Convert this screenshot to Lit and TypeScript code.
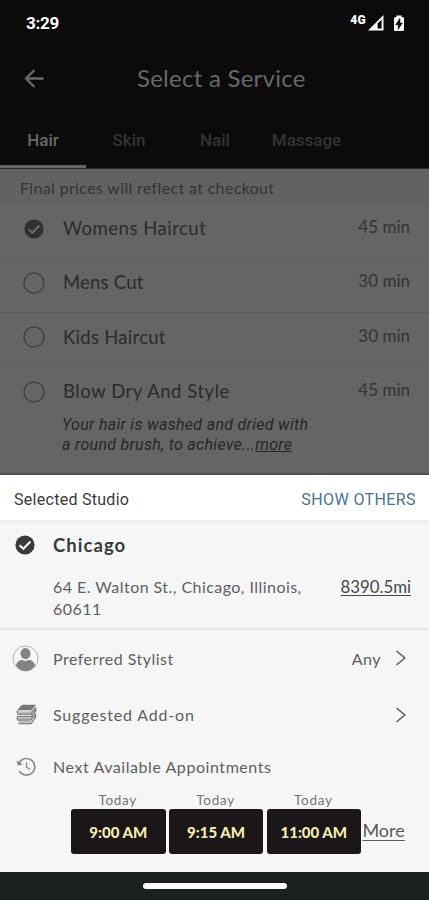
import { LitElement, html, css, svg, nothing } from "lit";
import { customElement } from "lit/decorators.js";
import { classMap } from "lit/directives/class-map.js";

interface Service {
  name: string;
  cls: string;
  mins: number;
  selected?: boolean;
  detail?: boolean;
}

const TABS = ["Hair", "Skin", "Nail", "Massage"];

const SERVICES: Service[] = [
  { name: "Womens Haircut", cls: "womens", mins: 45, selected: true },
  { name: "Mens Cut", cls: "mens", mins: 30 },
  { name: "Kids Haircut", cls: "kids", mins: 30 },
  { name: "Blow Dry And Style", cls: "blow", mins: 45, detail: true },
];

const SLOTS = ["9:00 AM", "9:15 AM", "11:00 AM"];

const check = (fill: string, tick: string) => html`<svg width="22" height="22" viewBox="0 0 22 22">
  ${svg`<circle cx="11" cy="11" r="9.6" fill=${fill} />
  <path d="M5.6 11.3 L9.4 14.8 L16.5 7.6" fill="none" stroke=${tick} stroke-width="2.1" />`}
</svg>`;

const ring = html`<svg width="22" height="22" viewBox="0 0 22 22">
  <circle cx="11" cy="11" r="10" fill="none" stroke="#3b3b3b" stroke-width="1.2" />
</svg>`;

const chevron = html`<svg class="chev" width="12" height="18" viewBox="0 0 12 18">
  <path d="M1.5 2 L9.8 9 L1.5 16" fill="none" stroke="#5a5a5a" stroke-width="1.5" />
</svg>`;

@customElement("app-root")
export class AppRoot extends LitElement {
  static styles = css`
    :host {
      display: flex;
      flex-direction: column;
      height: 900px;
      width: 429px;
      overflow: hidden;
      background: #656565;
      font-family: Lato, "Open Sans", sans-serif;
      white-space: nowrap;
    }
    * { box-sizing: border-box; }
    svg { display: block; flex: none; }
    .top { background: #0c0a0b; height: 169px; flex: none; display: flex; flex-direction: column; border-bottom: 1px solid #2d2c2d; }
    .status { height: 46px; padding: 0 24px 0 26px; display: flex; align-items: center; color: #fff; }
    .clock { font: 700 17px/46px Roboto, sans-serif; flex: 1; letter-spacing: -0.3px; }
    .net { font: 900 12px/12px Roboto, sans-serif; align-self: flex-start; margin-top: 14px; margin-right: 2px; letter-spacing: 0.3px; }
    .signal { margin-right: 9px; }
    .appbar { height: 66px; padding-left: 23px; display: grid; grid-template-columns: 22px 1fr; align-items: center; }
    .title { font-size: 24px; line-height: 64px; height: 66px; color: #686768; padding-left: 92px; letter-spacing: 0.25px; }
    .tabs { height: 56px; display: grid; grid-template-columns: 86px 86px 86px 97px; }
    .tab { height: 56px; font: 500 17px/57px Roboto, sans-serif; color: #343334; text-align: center; border-bottom: 3px solid transparent; }
    .tab.on { color: #696869; border-bottom-color: #646364; }
    .notice { height: 35px; flex: none; padding-left: 20px; background: #626262; color: #333; font-size: 16px; line-height: 38px; letter-spacing: 0.34px; }
    .service { height: 54.4px; flex: none; border-bottom: 1px solid #5c5c5c; display: grid; grid-template-columns: 40px 1fr auto; padding: 0 19px 0 23px; }
    .service.tall { height: 108px; border-bottom: 2px solid #505050; grid-template-rows: 48px 1fr; }
    .mark { padding-top: 13.5px; }
    .name { font-size: 18.5px; line-height: 48px; color: #2b2b2b; letter-spacing: 0.5px; }
    .name.mens { letter-spacing: 0.2px; }
    .name.kids { letter-spacing: 0.28px; }
    .name.blow { letter-spacing: 0.55px; }
    .mins { font-size: 17px; line-height: 46px; color: #333; }
    .desc { grid-column: 2 / 4; font: italic 400 16px/19.5px Roboto, sans-serif; color: #272727; letter-spacing: 0.3px; margin-left: -1px; }
    .sheet { background: #f6f6f6; height: 397px; flex: none; }
    .head { height: 48px; background: #fff; border-bottom: 3px solid #eeeeee; padding: 1px 13px 0 14px; display: flex; justify-content: space-between; font: 400 16px/47px Roboto, sans-serif; letter-spacing: 0.28px; color: #3a3a3a; }
    .others { color: #4a7291; letter-spacing: 0.4px; }
    .studio { height: 107px; border-bottom: 2px solid #e9e9e9; display: grid; grid-template-columns: 39px 1fr auto; grid-template-rows: 53px 1fr; padding: 0 18px 0 14px; }
    .smark { padding-top: 10.5px; }
    .city { grid-column: 2 / 4; font-size: 18.5px; font-weight: 700; line-height: 45px; color: #3a3a3a; letter-spacing: 1.05px; }
    .addr { grid-column: 2; font-size: 16px; line-height: 22px; color: #606060; letter-spacing: 0.45px; }
    .dist { font-size: 16.8px; line-height: 21px; color: #484848; text-decoration: underline; text-underline-offset: 2px; text-decoration-thickness: 1px; }
    .opt { display: flex; align-items: center; padding: 0 22px 0 12px; font-size: 16px; color: #606060; height: 56.5px; letter-spacing: 0.48px; }
    .opt.addon { letter-spacing: 0.83px; }
    .opt.next { height: 47.5px; letter-spacing: 0.56px; }
    .ico { width: 41px; flex: none; display: flex; }
    .ico.inset { padding-left: 4px; }
    .label { flex: 1; }
    .any { margin-right: 14px; }
    .next .label { margin-top: -1px; }
    .slots { display: flex; gap: 3.3px; padding-left: 71px; }
    .slot { width: 94.5px; text-align: center; }
    .day { font-size: 13.5px; line-height: 18px; color: #747474; letter-spacing: 0.7px; text-indent: -1px; }
    .time { height: 45px; border-radius: 3px; background: #1b1617; color: #f2ebb4; font-size: 15px; font-weight: 900; line-height: 46px; }
    .more { font-size: 18px; line-height: 26px; color: #5a5a5a; text-decoration: underline; text-underline-offset: 3px; text-decoration-thickness: 1px; margin: 26px 0 0 -2px; }
    .nav { flex: 1; background: #1b2120; display: flex; justify-content: center; padding-top: 11px; }
    .pill { width: 144px; height: 6px; border-radius: 3px; background: #fff; }
  `;

  render() {
    return html`
      <header class="top">
        <div class="status">
          <span class="clock">3:29</span>
          <span class="net">4G</span>
          <svg class="signal" width="16" height="17" viewBox="0 0 16 17">
            <path d="M0 15.5 L15.5 0 V15.5 Z" fill="#fff" />
            <path d="M9.6 8.4 L13.6 4.4 V13.6 H9.6 Z" fill="#0c0a0b" />
          </svg>
          <svg width="12" height="17" viewBox="0 0 12 17">
            <path d="M1 3.5 Q1 2 2.5 2 H3.5 V0.5 H8.5 V2 H9.5 Q11 2 11 3.5 V14.5 Q11 16 9.5 16 H2.5 Q1 16 1 14.5 Z" fill="#fff" />
            <path d="M7 3.2 V8 H9.4 L5.2 14.4 V9.8 H2.6 Z" fill="#0c0a0b" stroke="#0c0a0b" stroke-width="0.5" />
          </svg>
        </div>
        <div class="appbar">
          <svg width="22" height="22" viewBox="0 0 22 22">
            <path d="M20.5 10.5 H3 M11.5 2 L3 10.5 L11.5 19" fill="none" stroke="#686768" stroke-width="2.4" />
          </svg>
          <span class="title">Select a Service</span>
        </div>
        <nav class="tabs">
          ${TABS.map((t, i) => html`<div class=${classMap({ tab: true, on: i === 0 })}>${t}</div>`)}
        </nav>
      </header>
      <div class="notice">Final prices will reflect at checkout</div>
      ${SERVICES.map(
        (s) => html`<div class=${classMap({ service: true, tall: !!s.detail })}>
          <div class="mark">${s.selected ? check("#303030", "#6b6b6b") : ring}</div>
          <div class="name ${s.cls}">${s.name}</div>
          <div class="mins">${s.mins} min</div>
          ${s.detail
            ? html`<div class="desc">Your hair is washed and dried with<br />a round brush, to achieve...<u>more</u></div>`
            : nothing}
        </div>`
      )}
      <section class="sheet">
        <div class="head"><span>Selected Studio</span><span class="others">SHOW OTHERS</span></div>
        <div class="studio">
          <div class="smark">${check("#3a3a3a", "#f6f6f6")}</div>
          <div class="city">Chicago</div>
          <div class="addr">64 E. Walton St., Chicago, Illinois,<br />60611</div>
          <div class="dist">8390.5mi</div>
        </div>
        <div class="opt">
          <span class="ico">
            <svg width="27" height="27" viewBox="0 0 27 27">
              <circle cx="13.5" cy="13.5" r="12.5" fill="none" stroke="#aaa" stroke-width="0.9" />
              <ellipse cx="13.5" cy="8.6" rx="5" ry="5.6" fill="#848484" />
              <path d="M3.8 20.5 Q5 16 10 14.8 Q13.5 17 17 14.8 Q22 16 23.2 20.5 Q19 26 13.5 26 Q8 26 3.8 20.5 Z" fill="#848484" />
            </svg>
          </span>
          <span class="label">Preferred Stylist</span>
          <span class="any">Any</span>${chevron}
        </div>
        <div class="opt addon">
          <span class="ico inset">
            <svg width="21" height="21" viewBox="0 0 21 21">
              <path d="M7 0.8 H20 L15.5 6.2 H2 Q3.5 2 7 0.8 Z" fill="#777" />
              <path d="M2 6.2 Q0.6 8.2 2.2 10 H14.6 L19.6 4.6 V7.2 L15 12.6 H2 Q0.4 14.4 2 16 H14.6 L19.4 10.8 V13.6 L15 19.6 H2.4" fill="none" stroke="#808080" stroke-width="1.5" />
              <path d="M3 8.1 H15 L19.6 2.8 M2.6 14.3 H14.8 L19.4 9 M3 17.8 H14.6" fill="none" stroke="#9b9b9b" stroke-width="1" />
            </svg>
          </span>
          <span class="label">Suggested Add-on</span>${chevron}
        </div>
        <div class="opt next">
          <span class="ico inset">
            <svg width="21" height="20" viewBox="0 0 21 20">
              <path d="M3 6.2 A8.3 8.3 0 1 1 3.4 14.2" fill="none" stroke="#8a8a8a" stroke-width="1.6" />
              <path d="M0.6 3.4 L1.6 8.6 L6.8 7.4 Z" fill="#858585" />
              <path d="M10.6 5.4 V10.4 L14 12.2" fill="none" stroke="#8a8a8a" stroke-width="1.3" />
            </svg>
          </span>
          <span class="label">Next Available Appointments</span>
        </div>
        <div class="slots">
          ${SLOTS.map((t) => html`<div class="slot"><div class="day">Today</div><div class="time">${t}</div></div>`)}
          <span class="more">More</span>
        </div>
      </section>
      <footer class="nav"><div class="pill"></div></footer>
    `;
  }
}
